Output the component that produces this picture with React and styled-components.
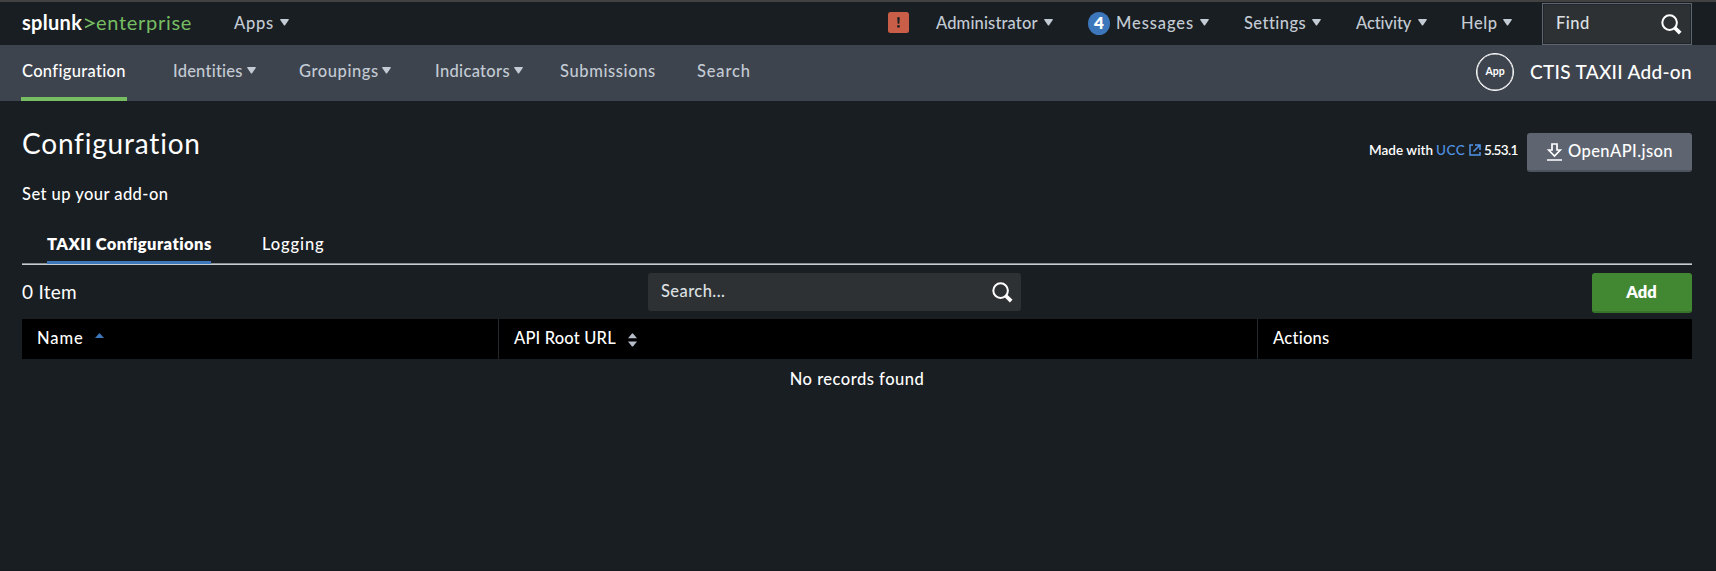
import React from 'react';
import styled, { createGlobalStyle } from 'styled-components';

const GlobalStyle = createGlobalStyle`
  * { box-sizing: border-box; }
  html, body { margin: 0; background: #191e22; }
  body {
    font-family: Lato, 'Open Sans', sans-serif;
    font-size: 16.5px;
    font-weight: 500;
    line-height: 20px;
    color: #fff;
    font-variant-ligatures: none;
  }
`;

const Page = styled.div`
  height: 571px;
  overflow: hidden;
  background: #191e22;
  border-bottom: 1px solid #161a1f;
`;

const TopBar = styled.header`
  height: 45px;
  padding: 0 24px 0 22px;
  border-top: 2px solid #424242;
  display: flex;
  align-items: flex-start;
  color: #c3cbd4;
`;

const Label = styled.span`
  display: inline-block;
  width: ${(p) => p.$w}px;
  letter-spacing: ${(p) => p.$track || 0}px;
  white-space: nowrap;
`;

const Brand = styled.div`
  display: flex;
  width: 212px;
  padding-top: 8px;
  font-size: 20px;
  line-height: 24px;
`;

const BrandName = styled.span`
  width: 62px;
  font-weight: 700;
  letter-spacing: 0.3px;
  color: #fff;
`;

const BrandEdition = styled.span`
  font-weight: 400;
  letter-spacing: 0.7px;
  color: #77bd62;
`;

const BrandMark = styled.svg`
  width: 12px;
  height: 24px;
  fill: none;
  stroke: #77bd62;
  stroke-width: 1.7;
`;

const TopItem = styled.div`
  display: flex;
  align-items: center;
  height: 20px;
  margin: 11px ${(p) => p.$gap || 0}px 0 0;
`;

const Caret = styled.svg`
  width: 9px;
  height: 7px;
  margin: 0 0 2px ${(p) => p.$gap}px;
  fill: currentColor;
`;

const Spacer = styled.div`
  flex: 1;
`;

const Alert = styled.svg`
  width: 21px;
  height: 21px;
  margin: 10px 27px 0 0;
`;

const Count = styled.span`
  flex: none;
  width: 22px;
  height: 23px;
  margin-right: 6px;
  border-radius: 50%;
  background: #3c76bb;
  color: #fff;
  font-size: 17px;
  font-weight: 800;
  line-height: 22px;
  text-align: center;
`;

const FindBox = styled.div`
  width: 150px;
  height: 42px;
  margin-top: 1px;
  padding: 9px 9px 0 13px;
  border: 1px solid #5c6570;
  box-shadow: inset 0 0 0 1px #20262a;
  background: #2d3134;
  display: flex;
  justify-content: space-between;
  color: #dde0e3;
`;

const SearchIcon = styled.svg`
  width: 21px;
  height: 21px;
  margin-top: 1px;
  fill: none;
  stroke: #fff;
`;

const AppBar = styled.nav`
  height: 56px;
  padding: 0 24px 0 21px;
  display: flex;
  background: #3e444e;
  color: #c3cbd4;
`;

const NavItem = styled.div`
  display: flex;
  align-items: center;
  height: 56px;
  margin-right: ${(p) => p.$gap || 0}px;
  padding: 0 0 4px 1px;
  ${(p) => p.$active && `
    color: #fff;
    padding-bottom: 0;
    border-bottom: 4px solid #77bd62;
  `}
`;

const AppBadge = styled.div`
  width: 38px;
  height: 38px;
  margin: 8px 16px 0 0;
  border: 1.5px solid #fff;
  box-shadow: inset 0 0 0 0.5px #fff;
  border-radius: 50%;
  font-size: 10.5px;
  font-weight: 700;
  line-height: 34px;
  text-align: center;
  color: #fff;
`;

const AppTitle = styled.div`
  width: 162px;
  padding-top: 15px;
  font-size: 19px;
  line-height: 24px;
  letter-spacing: 0.3px;
  white-space: nowrap;
  color: #fff;
`;

const Main = styled.main`
  padding: 0 24px 0 22px;
`;

const PageHead = styled.div`
  display: flex;
  justify-content: space-between;
  height: 118px;
`;

const Title = styled.h1`
  margin: 0;
  padding-top: 25px;
  font-size: 28px;
  font-weight: 400;
  line-height: 34px;
  letter-spacing: 0.8px;
`;

const Subtitle = styled.p`
  margin: 0;
  padding-top: 24px;
  letter-spacing: 0.45px;
`;

const HeadActions = styled.div`
  display: flex;
  padding-top: 32px;
`;

const MadeWith = styled.div`
  display: flex;
  height: 20px;
  margin-top: 7px;
  font-size: 13.5px;
  font-weight: 600;
`;

const Link = styled.a`
  display: flex;
  margin-right: 3px;
  color: #5094e8;
  font-weight: 500;
`;

const ExternalIcon = styled.svg`
  width: 12px;
  height: 12px;
  margin-top: 4px;
  fill: none;
  stroke: currentColor;
  stroke-width: 1.5;
`;

const DownloadButton = styled.button`
  width: 165px;
  height: 39px;
  margin: 0;
  padding: 8px 0 0 20px;
  border: 0;
  border-bottom: 2px solid #4e545f;
  border-radius: 3px;
  background: #5f6570;
  display: flex;
  font: inherit;
  color: #fff;
`;

const DownloadIcon = styled.svg`
  width: 15px;
  height: 18px;
  margin: 2px 6px 0 0;
  fill: none;
  stroke: #fff;
  stroke-width: 1.7;
`;

const Tabs = styled.div`
  display: flex;
  height: 46px;
  padding-left: 25px;
  box-shadow: inset 0 -1px #c8cdd0, inset 0 -2px #858b8f;
`;

const Tab = styled.div`
  width: ${(p) => p.$w}px;
  height: 45px;
  margin-right: 51px;
  padding-top: 15px;
  white-space: nowrap;
  letter-spacing: ${(p) => p.$track}px;
  ${(p) => p.$active && `
    font-weight: 800;
    border-bottom: 3px solid #3c76bb;
  `}
`;

const Toolbar = styled.div`
  display: grid;
  grid-template-columns: 626px 373px 1fr;
  height: 54px;
  padding-top: 8px;
`;

const ItemCount = styled.div`
  padding-top: 7px;
  font-size: 19px;
  font-weight: 400;
  line-height: 24px;
  letter-spacing: 0.26px;
`;

const SearchBox = styled.div`
  height: 38px;
  padding: 8px 8px 0 13px;
  border-radius: 3px;
  background: #2d3134;
  display: flex;
  justify-content: space-between;
  color: #dde0e3;
`;

const AddButton = styled.button`
  justify-self: end;
  width: 100px;
  height: 40px;
  padding: 0 1px 1px 0;
  border: 0;
  border-bottom: 2px solid #38752b;
  border-radius: 3px;
  background: #428832;
  font: inherit;
  font-weight: 800;
  color: #fff;
`;

const TableHead = styled.div`
  display: grid;
  grid-template-columns: 477px 759px 1fr;
  height: 40px;
  background: #000;
`;

const HeadCell = styled.div`
  display: flex;
  padding: 9px 0 0 15px;
  border-right: 1px solid #22282c;
  &:last-child { border-right: 0; }
`;

const SortIcon = styled.svg`
  width: 9px;
  height: 14px;
  margin: 5px 0 0 12px;
`;

const Empty = styled.div`
  padding-top: 10px;
  text-align: center;
  letter-spacing: 0.5px;
`;

const DownCaret = ({ gap }) => (
  <Caret $gap={gap} viewBox="0 0 9 7">
    <path d="M.8 0h7.4q1.2 0 .5 1L5.1 6.2q-.6.7-1.2 0L.3 1Q-.4 0 .8 0z" />
  </Caret>
);

const Magnifier = () => (
  <SearchIcon viewBox="0 0 21 21">
    <circle cx="8.6" cy="8.6" r="7.3" strokeWidth="2" />
    <path d="M14 14l5.2 5.2" strokeWidth="3.8" />
  </SearchIcon>
);

const topItems = [
  { text: 'Settings', w: 61, track: 0.44, caret: 7, gap: 35 },
  { text: 'Activity', w: 55, track: -0.1, caret: 7, gap: 34 },
  { text: 'Help', w: 35, track: 0.6, caret: 7, gap: 30 },
];

const navItems = [
  { text: 'Configuration', w: 105, track: 0.32, gap: 45, active: true },
  { text: 'Identities', w: 70, track: 0.22, caret: 4, gap: 42 },
  { text: 'Groupings', w: 79, track: 0.58, caret: 4, gap: 43 },
  { text: 'Indicators', w: 75, track: 0.33, caret: 4, gap: 36 },
  { text: 'Submissions', w: 95, track: 0.61, gap: 41 },
  { text: 'Search', w: 54, track: 0.85 },
];

export default function App() {
  return (
    <Page>
      <GlobalStyle />
      <TopBar>
        <Brand>
          <BrandName>splunk</BrandName>
          <BrandMark viewBox="0 0 12 24">
            <path d="M1 9l8.6 4.2L1 17.4" />
          </BrandMark>
          <BrandEdition>enterprise</BrandEdition>
        </Brand>
        <TopItem>
          <Label $w={40} $track={0.74}>Apps</Label>
          <DownCaret gap={6} />
        </TopItem>
        <Spacer />
        <Alert viewBox="0 0 21 21">
          <rect width="21" height="21" rx="2.5" fill="#c95e48" />
          <path d="M9.2 5.3h2.6l-.5 6.5H9.7zM9.2 13.2h2.6v2.4H9.2z" fill="#191e22" />
        </Alert>
        <TopItem $gap={35}>
          <Label $w={101} $track={0.14}>Administrator</Label>
          <DownCaret gap={7} />
        </TopItem>
        <TopItem $gap={35}>
          <Count>4</Count>
          <Label $w={77} $track={0.9}>Messages</Label>
          <DownCaret gap={7} />
        </TopItem>
        {topItems.map((i) => (
          <TopItem key={i.text} $gap={i.gap}>
            <Label $w={i.w} $track={i.track}>{i.text}</Label>
            <DownCaret gap={i.caret} />
          </TopItem>
        ))}
        <FindBox>
          <Label $w={33} $track={0.48}>Find</Label>
          <Magnifier />
        </FindBox>
      </TopBar>

      <AppBar>
        {navItems.map((i) => (
          <NavItem key={i.text} $gap={i.gap} $active={i.active}>
            <Label $w={i.w} $track={i.track}>{i.text}</Label>
            {i.caret && <DownCaret gap={i.caret} />}
          </NavItem>
        ))}
        <Spacer />
        <AppBadge>App</AppBadge>
        <AppTitle>CTIS TAXII Add-on</AppTitle>
      </AppBar>

      <Main>
        <PageHead>
          <div>
            <Title>Configuration</Title>
            <Subtitle>Set up your add-on</Subtitle>
          </div>
          <HeadActions>
            <MadeWith>
              <Label $w={67} $track={0.05}>Made with</Label>
              <Link>
                <Label $w={33} $track={0.5}>UCC</Label>
                <ExternalIcon viewBox="0 0 12 12">
                  <path d="M4 1H1v10h10V8M6 1h5v5M11 1L4.5 7.5" />
                </ExternalIcon>
              </Link>
              <Label $w={43} $track={-0.7}>5.53.1</Label>
            </MadeWith>
            <DownloadButton>
              <DownloadIcon viewBox="0 0 15 18">
                <path d="M5 1h5v6h3.4L7.5 13 1.6 7H5zM0 17h15" />
              </DownloadIcon>
              <Label $w={105} $track={0.42}>OpenAPI.json</Label>
            </DownloadButton>
          </HeadActions>
        </PageHead>

        <Tabs>
          <Tab $active $w={164} $track={0.44}>TAXII Configurations</Tab>
          <Tab $w={62} $track={0.88}>Logging</Tab>
        </Tabs>

        <Toolbar>
          <ItemCount>0 Item</ItemCount>
          <SearchBox>
            <Label $w={66} $track={0.43}>Search...</Label>
            <Magnifier />
          </SearchBox>
          <AddButton>Add</AddButton>
        </Toolbar>

        <TableHead>
          <HeadCell>
            <Label $w={46} $track={0.9}>Name</Label>
            <SortIcon viewBox="0 0 9 14">
              <path d="M0 5l3.8-4.3q.7-.7 1.4 0L9 5z" fill="#3c76bb" />
            </SortIcon>
          </HeadCell>
          <HeadCell>
            <Label $w={102} $track={0.17}>API Root URL</Label>
            <SortIcon viewBox="0 0 9 14">
              <path d="M0 5.3L3.8.7q.7-.7 1.4 0L9 5.3zM0 8.5h9l-3.8 4.7q-.7.7-1.4 0z" fill="#b8bec9" />
            </SortIcon>
          </HeadCell>
          <HeadCell>
            <Label $w={57} $track={0.25}>Actions</Label>
          </HeadCell>
        </TableHead>
        <Empty>No records found</Empty>
      </Main>
    </Page>
  );
}
